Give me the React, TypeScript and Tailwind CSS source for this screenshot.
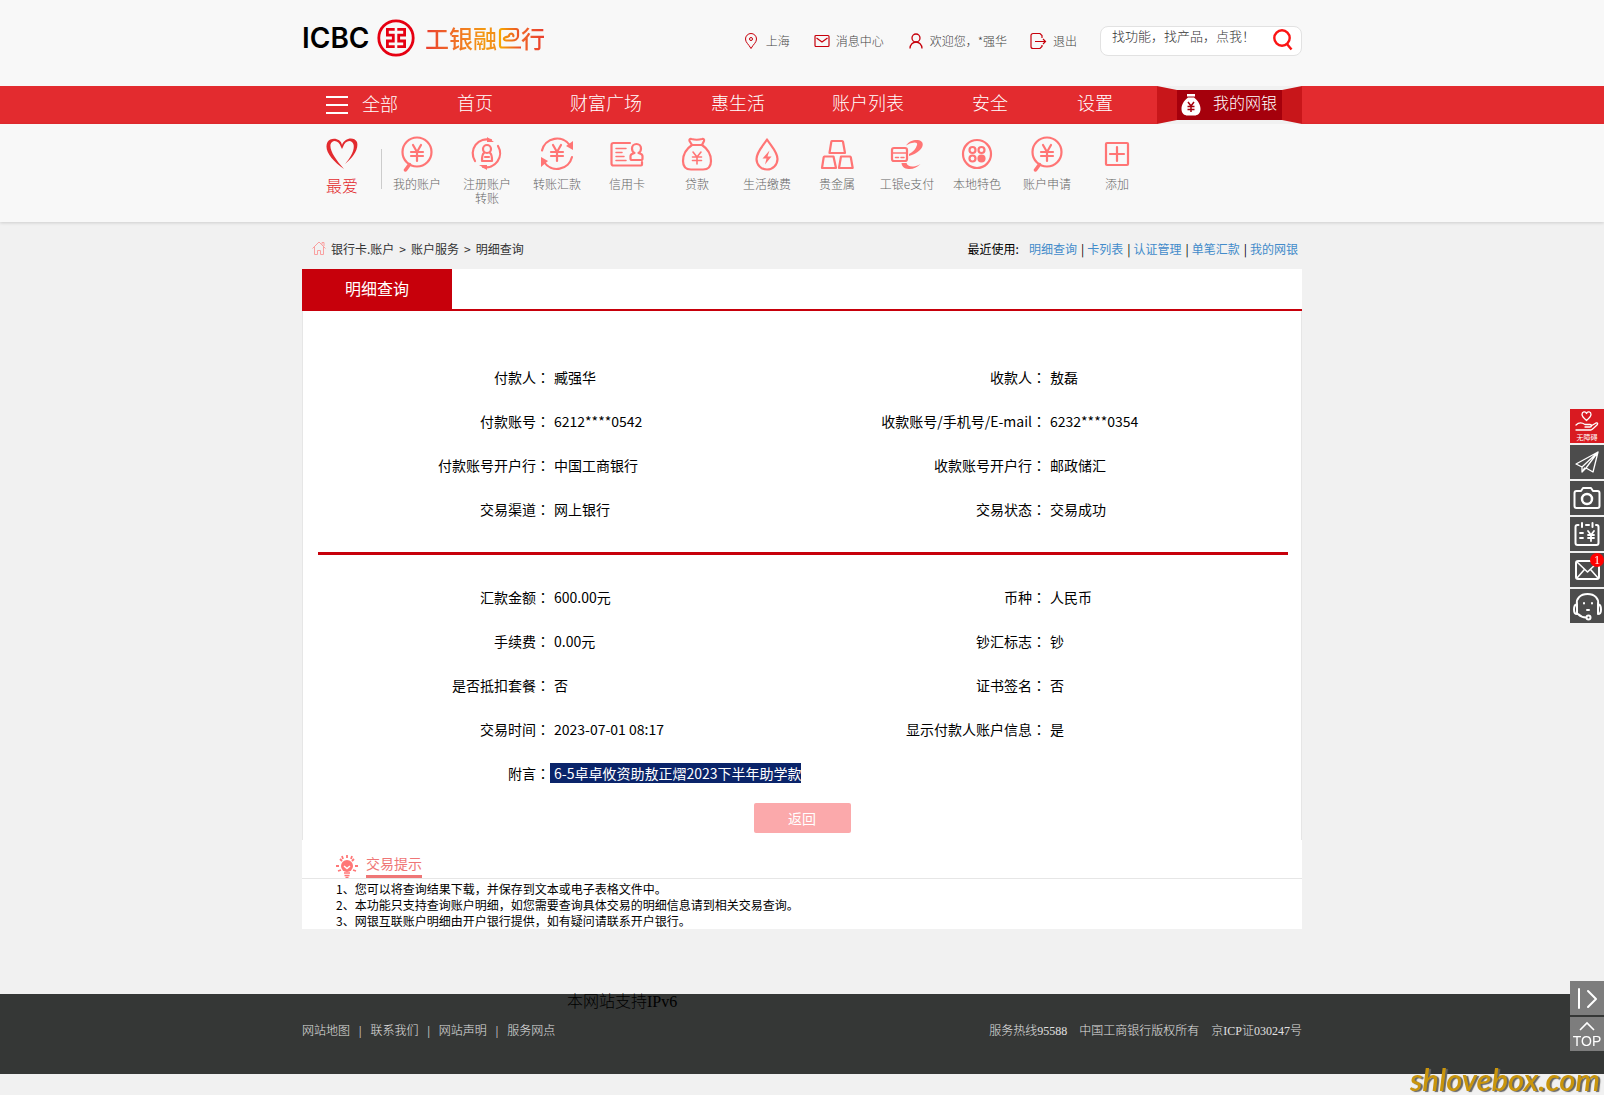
import type { ReactNode } from "react";

const yen = "M14 9l4 7 4-7M18 16v9M12 16h12M12 20h12";

const shortcuts: { label: string; icon: ReactNode }[] = [
	{ label: "我的账户", icon: <AccountIcon /> },
	{
		label: "注册账户转账",
		icon: (
			<>
				<path d="M6 25A14 14 0 0 1 22 4M29 10A14 14 0 0 1 14 31" />
				<path d="M18 1l7 5h-7zM18 34l-8-5h8z" fill="currentColor" stroke="none" />
				<circle cx="18" cy="13" r="4" />
				<path d="M15 17c-2 1-2 4-2 8h10c0-4 0-7-2-8" />
				<path d="M16 21h4" />
			</>
		),
	},
	{
		label: "转账汇款",
		icon: (
			<>
				<path d="M3 14.5A15.5 15.5 0 0 1 31 9.500M33 21A15.5 15.5 0 0 1 5 26" />
				<path d="M34 5v9l-7-4zM2 21l7 4-7 6z" fill="currentColor" stroke="none" />
				<path d={yen} />
			</>
		),
	},
	{
		label: "信用卡",
		icon: (
			<>
				<path d="M21 7H4.5a2 2 0 0 0-2 2v18.5a2 2 0 0 0 2 2H32a1 1 0 0 0 1-1V26" />
				<path d="M7 12.500h10M7 16.500h6M7 20.500h8M7 24.500h10" strokeWidth="1.5" />
				<path d="M25.500 17c-2-1-2.500-3-2.500-4.500a4.500 4.500 0 0 1 9 0c0 1.500-.5 3.500-2.500 4.500 2 .5 4 1.500 4 3v2.500a1.500 1.500 0 0 1-1.500 1.500H23a1.500 1.500 0 0 1-1.500-1.500V20c0-1.500 2-2.500 4-3z" />
			</>
		),
	},
	{
		label: "贷款",
		icon: (
			<>
				<path d="M13 9l-2.500-4c-.5-1.500.5-2.500 2-2 3.500 1 7 1 10.500 0 1.500-.5 2.500.5 2 2L23 9z" />
				<path d="M13 9C7 13 4 19 4 25c0 6 3 8.500 8 8.500h12c5 0 8-2.500 8-8.500 0-6-3-12-9-16" />
				<path d="M14 16l4 5 4-5M18 21v7M13.500 21h9M13.500 24.500h9" strokeWidth="1.6" />
			</>
		),
	},
	{
		label: "生活缴费",
		icon: (
			<>
				<path d="M18 3.500C14 10 7.500 16 7.500 23a10.500 10.500 0 0 0 21 0C28.500 16 22 10 18 3.500z" />
				<path d="M20.500 14.500L13.500 22.500h4l-1.500 6 6.500-8h-4z" fill="currentColor" stroke="none" />
			</>
		),
	},
	{
		label: "贵金属",
		icon: (
			<>
				<path d="M13 5h10a1 1 0 0 1 1 .8l2 11.200H10.500l1.800-11.200A1 1 0 0 1 13 5z" />
				<path d="M5.500 20.500h9l2.500 11.500H3l1.700-10.800a1 1 0 0 1 .8-.7zM22 20.500h9a1 1 0 0 1 .8.7L33.700 32H20z" />
			</>
		),
	},
	{
		label: "工银e支付",
		icon: (
			<>
				<rect x="3" y="12" width="15" height="13" rx="2" />
				<path d="M3 17h15M6.500 21.500h3M12 21.500h3" strokeWidth="1.5" />
				<path
					d="M17 9.500C20 5 25 3.500 29 4c6 1 6 6 2 10-3 3-7 5-11 6v-2c4-2 7-5 8-9 1-3-3-3-5-2-2 0-3 1-6 2.500zM12.500 27h5c1 4 7 5 14 1-4 4-8 5.500-12 5-4 0-7-3-7-6z"
					fill="currentColor"
					stroke="none"
				/>
			</>
		),
	},
	{
		label: "本地特色",
		icon: (
			<>
				<circle cx="18" cy="18" r="14" />
				<circle cx="13.5" cy="14" r="3" />
				<circle cx="22.5" cy="14" r="3" />
				<circle cx="13.5" cy="22.500" r="3" />
				<circle cx="22.5" cy="22.500" r="3" fill="currentColor" />
			</>
		),
	},
	{ label: "账户申请", icon: <AccountIcon /> },
	{
		label: "添加",
		icon: (
			<>
				<rect x="7" y="7" width="22" height="22" rx="1" />
				<path d="M11 18h14M18 11v14" />
			</>
		),
	},
];

const details = [
	["付款人", "臧强华", "收款人", "敖磊"],
	["付款账号", "6212****0542", "收款账号/手机号/E-mail", "6232****0354"],
	["付款账号开户行", "中国工商银行", "收款账号开户行", "邮政储汇"],
	["交易渠道", "网上银行", "交易状态", "交易成功"],
];

const amounts = [
	["汇款金额", "600.00元", "币种", "人民币"],
	["手续费", "0.00元", "钞汇标志", "钞"],
	["是否抵扣套餐", "否", "证书签名", "否"],
	["交易时间", "2023-07-01 08:17", "显示付款人账户信息", "是"],
];

const recent = ["明细查询", "卡列表", "认证管理", "单笔汇款", "我的网银"];
const footerLinks = ["网站地图", "联系我们", "网站声明", "服务网点"];

function AccountIcon() {
	return (
		<>
			<circle cx="18" cy="16" r="14.5" />
			<path d="M10.500 28.500L6.500 34" strokeWidth="3.5" />
			<path d={yen} />
		</>
	);
}

function Field({ label, children }: { label: string; children: ReactNode }) {
	return (
		<div className="flex">
			<dt className="w-[244px] shrink-0 text-right whitespace-nowrap">
				{label}
				<span className="font-['Noto_Sans_CJK_TC',sans-serif]">：</span>
			</dt>
			<dd className="whitespace-nowrap">{children}</dd>
		</div>
	);
}

function Fields({ rows }: { rows: string[][] }) {
	return (
		<dl className="grid grid-cols-2 px-1 leading-[44px]">
			{rows.flatMap(([a, b, c, d]) => [
				<Field key={a} label={a}>
					<span className="pl-1">{b}</span>
				</Field>,
				<Field key={c} label={c}>
					<span className="pl-1">{d}</span>
				</Field>,
			])}
		</dl>
	);
}

function SideButton({ label, className, children }: { label: string; className: string; children: ReactNode }) {
	return (
		<button type="button" aria-label={label} className={`relative block size-[34px] text-white ${className}`}>
			{children}
		</button>
	);
}

function SideIcon({ children }: { children: ReactNode }) {
	return (
		<svg viewBox="0 0 34 34" className="size-[34px]" fill="none" stroke="currentColor" strokeWidth="2" strokeLinecap="round" strokeLinejoin="round">
			{children}
		</svg>
	);
}

function Logo() {
	return (
		<a href="#" className="flex h-[38px] items-center text-black">
			<span className="w-[67px] font-['Inter',sans-serif] text-[28px] leading-9 font-semibold">ICBC</span>
			<svg viewBox="0 0 38 38" className="ml-2 size-[38px]" fill="none" stroke="#e60012">
				<circle cx="19" cy="19" r="17.2" strokeWidth="2.800" />
				<path d="M17.700 10.400H10.400V16.100H16.300V22H10.400V27.700H17.700M20.300 10.400H27.600V16.100H21.700V22H27.600V27.700H20.300" strokeWidth="2.800" />
			</svg>
			<span className="ml-[10px] flex items-center bg-linear-to-r from-[#ea3a2e] via-[#f39a10] to-[#ea3a2e] bg-clip-text font-['Noto_Sans_CJK_SC',sans-serif] text-2xl leading-9 font-medium text-transparent">
				工银融
				<svg viewBox="0 0 24 24" className="size-6" fill="none" strokeWidth="2.200">
					<defs>
						<linearGradient id="mark" x1="0" x2="1">
							<stop offset="0" stopColor="#f6a800" />
							<stop offset="1" stopColor="#ea4a2e" />
						</linearGradient>
					</defs>
					<path
						d="M24 21.500H5a2 2 0 0 1-2-2V5a2 2 0 0 1 2-2h14a2 2 0 0 1 2 2v5c0 3-3 4.500-6 4.500H9c-2 0-3-2-1-3 2-.8 3-.5 4-1.500 0-2 2-3 3.500-2 1 .8 1 2 .5 3"
						stroke="url(#mark)"
					/>
				</svg>
				行
			</span>
		</a>
	);
}

export default function App() {
	return (
		<div className="min-h-screen bg-[#f1f1f1] font-['Noto_Sans_CJK_SC',sans-serif] text-sm text-black">
			<header className="bg-[#f8f8f8]">
				<div className="mx-auto flex h-[86px] w-full max-w-[1000px] justify-between">
					<div className="pt-[19px]">
						<Logo />
					</div>
					<div className="flex h-20 items-center pt-0.5 text-xs leading-[14px] font-light text-[#444]">
						<a href="#" className="mr-6 flex items-center gap-2">
							<svg viewBox="0 0 14 18" className="h-[18px] w-[14px]" fill="none" stroke="#c7000b">
								<path d="M7 1.500a5.500 5.500 0 0 0-5.500 5.500c0 3.500 3 5 5.500 9.500 2.500-4.500 5.500-6 5.500-9.500A5.500 5.500 0 0 0 7 1.500z" />
								<circle cx="7" cy="7" r="1.5" />
							</svg>
							上海
						</a>
						<a href="#" className="mr-6 flex items-center gap-1.5">
							<svg viewBox="0 0 16 14" className="h-[14px] w-4" fill="none" stroke="#c7000b" strokeWidth="1.2">
								<rect x="1" y="1.500" width="14" height="11" rx="1" />
								<path d="M2.500 4L8 8l5.500-4" />
							</svg>
							消息中心
						</a>
						<a href="#" className="mr-[22px] flex items-center gap-1.5">
							<svg viewBox="0 0 16 18" className="h-[18px] w-4" fill="none" stroke="#c7000b" strokeWidth="1.3">
								<circle cx="8" cy="6" r="4" />
								<path d="M2 16.500c0-4 3-6.500 6-6.500s6 2.500 6 6.500" />
							</svg>
							欢迎您，*强华
						</a>
						<a href="#" className="mr-[23px] flex items-center gap-1.5">
							<svg viewBox="0 0 18 18" className="size-[18px]" fill="none" stroke="#c7000b" strokeWidth="1.2">
								<path d="M13 6V3.500L11 1.500H4a2 2 0 0 0-2 2v11a2 2 0 0 0 2 2h7l2-2V13M6 9.500h10.500M14 7l2.500 2.500L14 12" />
							</svg>
							退出
						</a>
						<form className="flex h-[30px] w-[202px] items-start rounded-lg border border-[#e2e2e2] bg-white pl-[11px]" onSubmit={(e) => e.preventDefault()}>
							<input
								aria-label="搜索"
								placeholder="找功能，找产品，点我！"
								className="h-[18px] w-[150px] text-[13px] leading-[18px] font-light outline-none placeholder:text-[#333]"
							/>
							<button type="submit" aria-label="搜索" className="ml-[10px] pt-px">
								<svg viewBox="0 0 22 24" className="h-6 w-[22px]" fill="none" stroke="#fb1414" strokeWidth="2.400">
									<circle cx="10" cy="10" r="7.7" />
									<path d="M14.500 15.500l5 6" />
								</svg>
							</button>
						</form>
					</div>
				</div>
			</header>

			<nav className="bg-[#e32b2f] text-white">
				<div className="mx-auto grid h-[38px] w-full max-w-[1000px] grid-cols-[155px_113px_141px_121px_140px_105px_1fr_145px] text-lg leading-8 font-light">
					<button type="button" className="flex items-center pl-6 text-left">
						<svg viewBox="0 0 22 18" className="mr-[14px] h-[18px] w-[22px]" stroke="currentColor" strokeWidth="2">
							<path d="M0 1h22M0 9h22M0 17h22" />
						</svg>
						<span className="h-[38px] leading-[34px]">全部</span>
					</button>
					<a href="#">首页</a>
					<a href="#">财富广场</a>
					<a href="#">惠生活</a>
					<a href="#">账户列表</a>
					<a href="#">安全</a>
					<a href="#">设置</a>
					<a href="#" className="relative flex items-center pl-6 text-base">
						<svg viewBox="0 0 145 38" className="absolute inset-0 h-full w-full" preserveAspectRatio="none">
							<path d="M0 0h145v38H0z" fill="#f1f1f1" />
							<path d="M0 0l20 4v30L0 38zM145 0l-20 4v30l20 4z" fill="#c8161a" />
							<path d="M20 4h105v30H20z" fill="#a5000c" />
						</svg>
						<svg viewBox="0 0 20 22" className="relative mr-3 h-[22px] w-5">
							<path d="M6 0h8v2.500H6zM7 3.500h6c4 3 6.500 7 6.500 11.500 0 4.500-3 6.500-6 6.500h-7c-3 0-6-2-6-6.500C.5 10.500 3 6.500 7 3.500z" fill="#fff" />
							<path d="M7 8l3 4 3-4M10 12v6M6.500 12.500h7M6.500 15.500h7" fill="none" stroke="#a5000c" strokeWidth="1.5" />
						</svg>
						<span className="relative h-[38px] leading-8">我的网银</span>
					</a>
				</div>
			</nav>

			<div className="bg-[#f8f8f8] shadow-[0_1px_3px_rgba(0,0,0,0.15)]">
				<div className="mx-auto flex h-[98px] w-full max-w-[1000px] pt-3 font-light">
					<button type="button" className="ml-[17px] flex w-[46px] flex-col items-center text-base leading-5 text-[#e32b2f]">
						<svg viewBox="0 0 32 36" className="mb-[3px] h-9 w-8" fill="currentColor">
							<path d="M16 9C15 2 5 .5 1.500 6c-4 8 4 18 16.500 27C10 24 3.500 15 4.500 8.500 6 3 13 4 15 11l1 2 1-2c2-7 9-8 10.500-2.500C29 14 24 22 19 28c8-6 14-15 12-22C28 0 18 2 16 9z" />
						</svg>
						最爱
					</button>
					<span className="mt-[13px] ml-4 h-10 w-px bg-[#ccc]" />
					{shortcuts.map((item) => (
						<a key={item.label} href="#" className="flex w-[70px] flex-col items-center text-center text-xs leading-[14px] text-[#666]">
							<svg viewBox="0 0 36 36" className="mb-[5px] size-9 text-[#ff7575]" fill="none" stroke="currentColor" strokeWidth="2.2" strokeLinecap="round" strokeLinejoin="round">
								{item.icon}
							</svg>
							<span className="max-w-[58px]">{item.label}</span>
						</a>
					))}
				</div>
			</div>

			<main className="mx-auto w-full max-w-[1000px]">
				<div className="flex h-[47px] items-center justify-between pt-[6px] pr-1 pl-[10px] text-xs">
					<div className="flex items-center gap-[5px] text-[#333]">
						<svg viewBox="0 0 14 14" className="mb-0.5 size-[14px]" fill="none" stroke="#f9a0a0">
							<path d="M.5 7.500L7 1l6.500 6.500M2.500 6v7.500h3v-4h3v4h3V6M10 3.500v-2h2V5" />
						</svg>
						<a href="#">银行卡.账户</a>
						<span>&gt;</span>
						<a href="#">账户服务</a>
						<span>&gt;</span>
						<a href="#">明细查询</a>
					</div>
					<div className="flex">
						<span className="mr-[10px]">最近使用:</span>
						{recent.map((name, i) => (
							<span key={name}>
								{i > 0 && <span className="pr-[3px] pl-1">|</span>}
								<a href="#" className="text-[#428bca]">
									{name}
								</a>
							</span>
						))}
					</div>
				</div>

				<div className="flex h-[42px] border-b-2 border-[#c7000b] bg-white">
					<h1 className="w-[150px] bg-[#c7000b] text-center text-base leading-[38px] text-white">明细查询</h1>
				</div>

				<section className="border-x border-[#e6e6e6] bg-white pt-11 pb-[7px]">
					<div className="-mx-px">
						<Fields rows={details} />
						<hr className="mt-[21px] mr-[14px] mb-5 ml-4 border-t-[3px] border-[#c7000b]" />
						<Fields rows={amounts} />
						<dl className="px-1 leading-[44px]">
							<Field label="附言">
								<span className="bg-[#0a246a] pl-1 text-white">6-5卓卓攸资助敖正熠2023下半年助学款</span>
							</Field>
						</dl>
					</div>
					<button type="button" className="mx-auto mt-2 block h-[30px] w-[97px] rounded-xs bg-[#fba9ab] text-white">
						返回
					</button>
				</section>

				<section className="bg-white text-xs">
					<div className="flex h-[39px] items-end border-b border-[#e6e6e6] pl-[34px]">
						<svg viewBox="0 0 22 24" className="mr-2 h-6 w-[22px]" fill="none" stroke="#f77" strokeWidth="2">
							<circle cx="11" cy="12" r="6" fill="#f77" stroke="none" />
							<path d="M11 1v3M4 5l2 2M18 5l-2 2M0 12h3M19 12h3M6 2l1 3M16 2l-1 3M2 17l3-1M20 17l-3-1" strokeWidth="1.8" />
							<path d="M8 12l3 2.500 3-2.500" stroke="#fff" strokeWidth="1.5" />
							<path d="M8 19h6M8.500 21.500h5M9.500 23.500h3" strokeWidth="1.5" />
						</svg>
						<h2 className="border-b-[3px] border-[#ef7676] text-sm leading-6 text-[#ef7676]">交易提示</h2>
					</div>
					<ol className="pt-0.5 pl-[34px] leading-4">
						<li>1、您可以将查询结果下载，并保存到文本或电子表格文件中。</li>
						<li>2、本功能只支持查询账户明细，如您需要查询具体交易的明细信息请到相关交易查询。</li>
						<li>3、网银互联账户明细由开户银行提供，如有疑问请联系开户银行。</li>
					</ol>
				</section>
			</main>

			<footer className="mt-[65px] h-20 bg-[#353736] font-['Liberation_Serif','Noto_Sans_CJK_SC',sans-serif] font-light">
				<div className="mx-auto w-full max-w-[1000px]">
					<p className="pl-[265px] text-base leading-4">本网站支持IPv6</p>
					<div className="flex justify-between pt-[13px] text-xs leading-4 text-[#e0e0e0]">
						<div className="flex">
							{footerLinks.map((name, i) => (
								<span key={name}>
									{i > 0 && <span className="px-[9px]">|</span>}
									<a href="#">{name}</a>
								</span>
							))}
						</div>
						<div className="flex gap-3">
							<span>服务热线95588</span>
							<span>中国工商银行版权所有</span>
							<span>京ICP证030247号</span>
						</div>
					</div>
				</div>
			</footer>

			<div className="fixed top-[409px] right-0 flex flex-col gap-0.5">
				<SideButton label="无障碍" className="bg-[#d91a21]">
					<svg viewBox="0 0 34 34" className="absolute inset-0" fill="none" stroke="currentColor" strokeWidth="1.3" strokeLinecap="round" strokeLinejoin="round">
						<path d="M16.500 11.500c-3-2.500-4.500-4-4.500-6 0-3 3.500-3.500 4.500-1 1-2.500 4.500-2 4.500 1 0 2-1.500 3.500-4.500 6z" />
						<path d="M6 16c3-3 6-2.500 9-.5h5c2 0 2 2.500 0 2.500h-5M21 17l5-3c2-.5 2 1 1 2-2 2-4 4-6 5H6" />
					</svg>
					<span className="absolute inset-x-0 bottom-0.5 text-[7px] leading-2">无障碍</span>
				</SideButton>
				<SideButton label="转账" className="bg-[#4c4c4c]">
					<SideIcon>
						<path d="M28 7L6 19l6 3zM28 7L12 22v5l4-4M28 7L16 23l7 4zM12 27l2.500-4" strokeWidth="1.3" />
					</SideIcon>
				</SideButton>
				<SideButton label="截图" className="bg-[#4c4c4c]">
					<SideIcon>
						<path d="M6.500 10H11l2-3h8l2 3h4.500a2 2 0 0 1 2 2v13a2 2 0 0 1-2 2h-21a2 2 0 0 1-2-2V12a2 2 0 0 1 2-2z" />
						<circle cx="17" cy="18" r="5" strokeWidth="2.5" />
					</SideIcon>
				</SideButton>
				<SideButton label="日历" className="bg-[#4c4c4c]">
					<SideIcon>
						<path d="M8.500 8H7.500a2 2 0 0 0-2 2v16a2 2 0 0 0 2 2h19a2 2 0 0 0 2-2V10a2 2 0 0 0-2-2H26M16 8h3M12 6v4M22.500 6v4" />
						<path d="M10 16h3M10 21h3M18 14l3 4 3-4M21 18v6M18 18h6M18 21h6" strokeWidth="1.8" />
					</SideIcon>
				</SideButton>
				<SideButton label="消息" className="bg-[#4c4c4c]">
					<SideIcon>
						<rect x="6" y="8" width="23" height="18" rx="2" />
						<path d="M7 9l10.500 10L28 9M7 25l7-8M28 25l-7-8" strokeWidth="1.6" />
					</SideIcon>
					<span className="absolute top-0 right-0 size-[14px] rounded-full bg-[#f00] text-center font-['Liberation_Serif',serif] text-xs leading-[14px]">1</span>
				</SideButton>
				<SideButton label="客服" className="bg-[#4c4c4c]">
					<SideIcon>
						<path d="M7 15C6 10 10 5 17.500 5S29 10 28 15M7 15v10c-4 0-4-9 0-10M28 15v10c4 0 4-9 0-10M8 25c2 2 4 3.500 8 3.500" />
						<circle cx="18.5" cy="28.500" r="2" />
						<path d="M14 14v.5M22 14v.5M17 21h2" />
					</SideIcon>
				</SideButton>
			</div>

			<div className="fixed right-0 bottom-11 flex flex-col gap-0.5">
				<SideButton label="收起" className="bg-[#7d7d7d]">
					<SideIcon>
						<path d="M9 8v19M18 10l8 8-8 8" />
					</SideIcon>
				</SideButton>
				<SideButton label="返回顶部" className="bg-[#7d7d7d]">
					<svg viewBox="0 0 34 34" className="absolute inset-0" fill="none" stroke="currentColor" strokeWidth="1.6">
						<path d="M10 13l7-7 7 7" />
					</svg>
					<span className="absolute inset-x-0 bottom-0.5 font-['Liberation_Sans',sans-serif] text-sm leading-4">TOP</span>
				</SideButton>
			</div>

			<p className="fixed right-1 bottom-0 font-['Lato',sans-serif] text-[31px] leading-8 font-semibold text-[#c9950c] italic [text-shadow:2px_1px_1px_#666]">shlovebox.com</p>
		</div>
	);
}
